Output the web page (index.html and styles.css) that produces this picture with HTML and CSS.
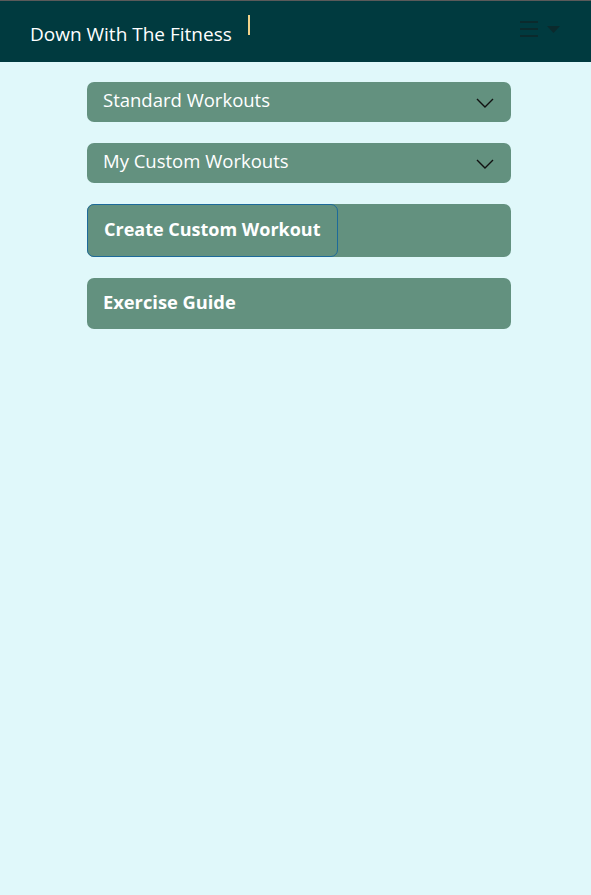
FILE: index.html
```html
<!DOCTYPE html>
<html>
<head>
<meta charset="utf-8">
<link rel="stylesheet" href="styles.css">
</head>
<body>
<header class="navbar">
  <div class="brand">Down With The Fitness</div>
  <span class="divider"></span>
  <div class="spacer"></div>
  <button class="menu-toggle" aria-label="menu">
    <svg width="18" height="17" viewBox="0 0 18 17"><rect x="0" y="0" width="18" height="2" fill="#0b2a2d"/><rect x="0" y="7" width="18" height="2" fill="#0b2a2d"/><rect x="0" y="14" width="18" height="2" fill="#0b2a2d"/></svg>
    <svg width="13" height="7" viewBox="0 0 13 7"><polygon points="0,0 13,0 6.5,7" fill="#0b2a2d"/></svg>
  </button>
</header>
<main class="content">
  <div class="card dropdown">
    <span>Standard Workouts</span>
    <svg class="chev" width="18" height="10" viewBox="0 0 18 10"><polyline points="1,1 9,9 17,1" fill="none" stroke="#111" stroke-width="1.4"/></svg>
  </div>
  <div class="card dropdown">
    <span>My Custom Workouts</span>
    <svg class="chev" width="18" height="10" viewBox="0 0 18 10"><polyline points="1,1 9,9 17,1" fill="none" stroke="#111" stroke-width="1.4"/></svg>
  </div>
  <div class="card tall">
    <button class="inner-btn">Create Custom Workout</button>
  </div>
  <div class="card link">
    <span>Exercise Guide</span>
  </div>
</main>
</body>
</html>
```
FILE: styles.css
```css
html, body {
  margin: 0;
  padding: 0;
  background: #e0f8fa;
  font-family: "Open Sans", "Noto Sans", sans-serif;
}
body {
  min-height: 895px;
  border-top: 1px solid #5a5a5a;
  box-sizing: border-box;
}
.navbar {
  height: 61px;
  background: #003a3f;
  display: flex;
  align-items: flex-start;
  padding-left: 30px;
  padding-right: 31px;
  box-sizing: border-box;
}
.brand {
  color: #ffffff;
  font-size: 19px;
  font-weight: 500;
  line-height: 24px;
  margin-top: 21px;
  letter-spacing: 0;
}
.divider {
  display: block;
  width: 2px;
  height: 20px;
  background: #f0d28a;
  margin-left: 16px;
  margin-top: 14px;
}
.spacer { flex: 1; }
.menu-toggle {
  background: none;
  border: none;
  padding: 0;
  margin-top: 20px;
  display: flex;
  align-items: center;
  gap: 9px;
  height: 17px;
}
.content {
  padding: 20px 0 0 87px;
  display: flex;
  flex-direction: column;
  gap: 21px;
}
.card {
  width: 424px;
  background: #63917f;
  border-radius: 7px;
  color: #ffffff;
  font-size: 18.5px;
  font-weight: 500;
  box-sizing: border-box;
}
.dropdown {
  height: 40px;
  display: flex;
  align-items: center;
  justify-content: space-between;
  padding: 0 17px 4px 16px;
  line-height: 24px;
}
.chev { margin-top: 6px; }
.tall {
  height: 53px;
  display: flex;
}
.inner-btn {
  width: 251px;
  height: 53px;
  background: transparent;
  border: 1px solid #1d6a9a;
  border-radius: 7px;
  color: #ffffff;
  font-family: inherit;
  font-size: 18px;
  font-weight: 700;
  text-align: left;
  padding: 0 0 4px 16px;
  box-sizing: border-box;
}
.link {
  height: 51px;
  display: flex;
  align-items: center;
  padding: 0 0 5px 16px;
  font-size: 18.3px;
  font-weight: 700;
}
```
